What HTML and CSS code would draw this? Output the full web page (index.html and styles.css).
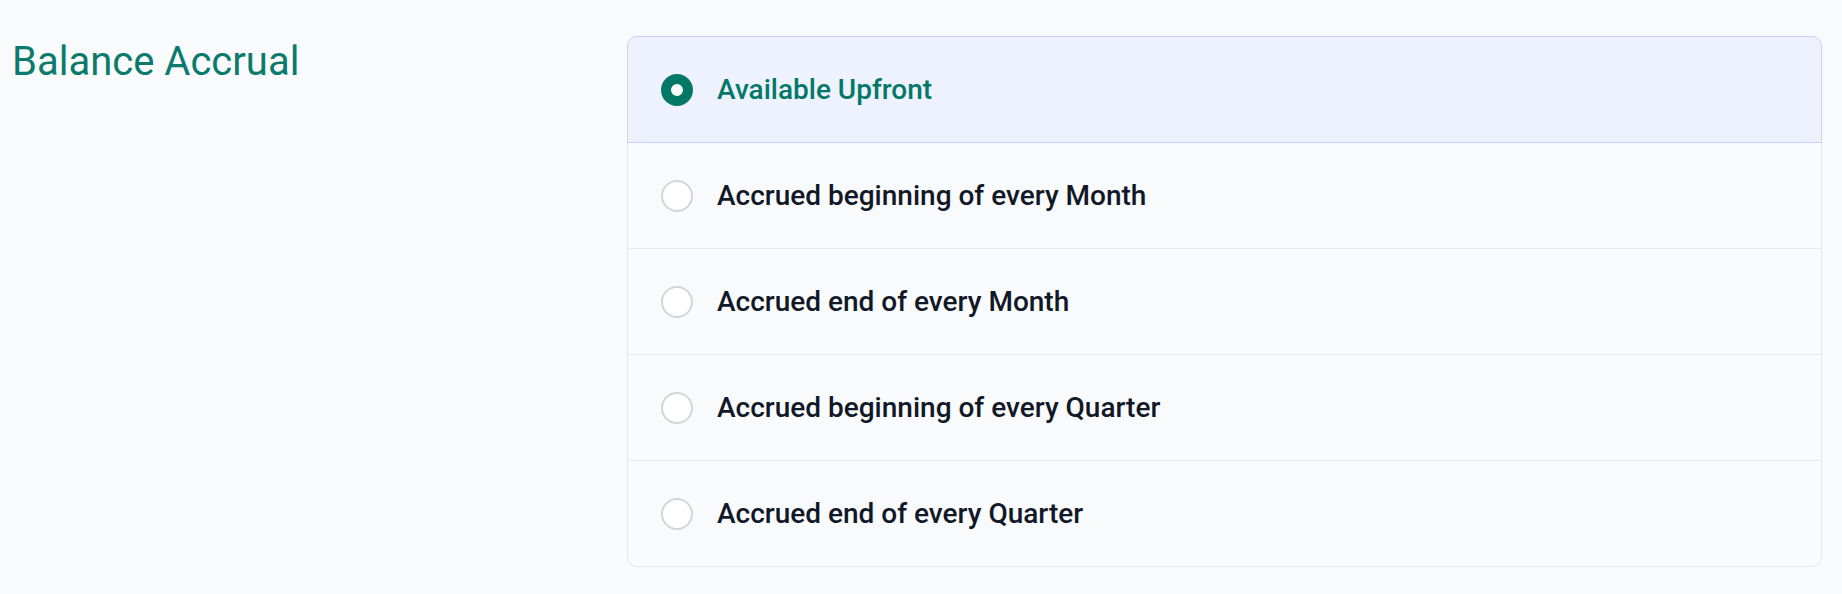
FILE: index.html
```html
<!DOCTYPE html>
<html lang="en">
<head>
<meta charset="utf-8">
<title>Balance Accrual</title>
<link rel="stylesheet" href="styles.css">
</head>
<body>
<div class="page">
  <h1 class="title">Balance Accrual</h1>
  <div class="options">
    <label class="option selected">
      <span class="radio"></span>
      <span class="label">Available Upfront</span>
    </label>
    <label class="option">
      <span class="radio"></span>
      <span class="label">Accrued beginning of every Month</span>
    </label>
    <label class="option">
      <span class="radio"></span>
      <span class="label">Accrued end of every Month</span>
    </label>
    <label class="option">
      <span class="radio"></span>
      <span class="label">Accrued beginning of every Quarter</span>
    </label>
    <label class="option last">
      <span class="radio"></span>
      <span class="label">Accrued end of every Quarter</span>
    </label>
  </div>
</div>
</body>
</html>
```
FILE: styles.css
```css
html, body {
  margin: 0;
  padding: 0;
  background: #f9fafb;
}
body {
  font-family: Roboto, "Liberation Sans", Arial, sans-serif;
}
.page {
  display: grid;
  grid-template-columns: 615px 1fr;
  padding: 36px 20px 0 12px;
}
.title {
  margin: 0;
  font-size: 40px;
  line-height: 52px;
  font-weight: 400;
  color: #0b7a6c;
}
.options {
  display: flex;
  flex-direction: column;
  border: 1px solid #e5e7eb;
  border-radius: 10px;
  background: #f9fafb;
}
.option {
  display: flex;
  align-items: center;
  gap: 24px;
  height: 105px;
  padding-left: 33px;
  border-bottom: 1px solid #e5e7eb;
}
.option.last {
  border-bottom: none;
}
.option.selected {
  margin: -1px -1px 0 -1px;
  padding-left: 33px;
  height: 105px;
  border: 1px solid #c7d2fe;
  border-radius: 10px 10px 0 0;
  background: #eef2ff;
}
.radio {
  box-sizing: border-box;
  width: 32px;
  height: 32px;
  border-radius: 50%;
  border: 2px solid #d1d5db;
  background: #ffffff;
  flex: none;
}
.selected .radio {
  border: 10.5px solid #047866;
  background: #ffffff;
}
.label {
  font-size: 28px;
  font-weight: 500;
  color: #111827;
}
.selected .label {
  color: #047866;
}
```
